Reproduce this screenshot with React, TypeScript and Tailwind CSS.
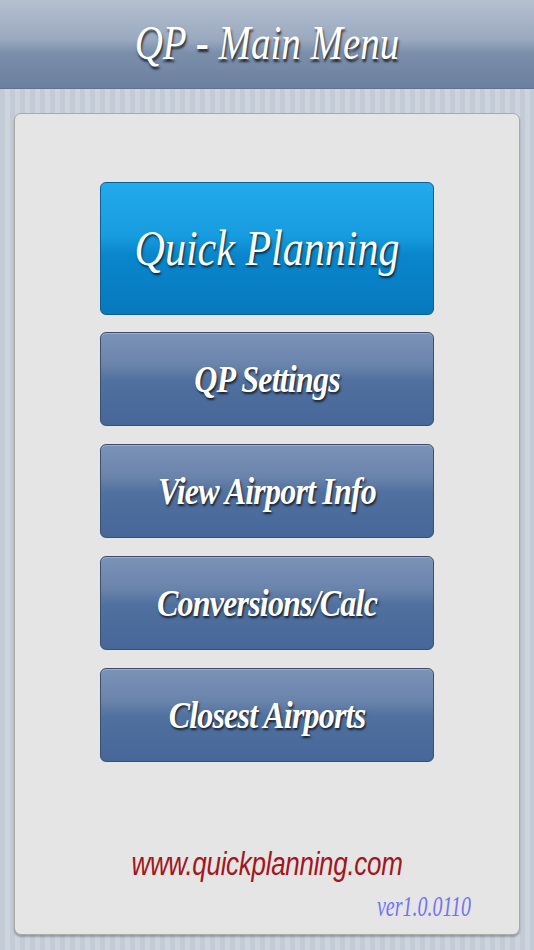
import React from "react";

const serif = "font-['Liberation_Serif',_'Times_New_Roman',_serif]";

function MenuButton({ label }: { label: string }) {
  return (
    <button className="h-[94px] w-full rounded-[6px] border border-[#3b4f70] bg-[linear-gradient(180deg,#7c93b7_0%,#6a83ab_35%,#50709f_52%,#466798_100%)] shadow-[inset_0_1px_0_rgba(255,255,255,0.25)] flex items-center justify-center">
      <span
        className={`${serif} inline-block scale-y-[1.18] text-[32px] font-bold italic tracking-[-0.8px] text-white [text-shadow:1px_2px_2px_rgba(0,0,0,0.75)]`}
      >
        {label}
      </span>
    </button>
  );
}

export default function App() {
  return (
    <div className="flex h-[950px] w-[534px] flex-col bg-[repeating-linear-gradient(90deg,#c3cbd6_0px,#c3cbd6_5px,#cdd4de_5px,#cdd4de_10px)]">
      <header className="flex h-[89px] shrink-0 items-center justify-center bg-[linear-gradient(180deg,#b5c0d0_0%,#9aa9bf_45%,#7b8fab_60%,#6b809f_100%)] border-b border-[#5e7394]">
        <h1
          className={`${serif} inline-block scale-y-[1.24] text-[39px] italic text-white [text-shadow:1px_2px_2px_rgba(0,0,0,0.7)] -mt-[2px]`}
        >
          QP - Main Menu
        </h1>
      </header>
      <div className="px-[14px] pt-[24px]">
        <main className="flex h-[822px] flex-col rounded-[7px] border border-[#a9a9a9] bg-[#e5e5e5] shadow-[0_2px_2px_rgba(0,0,0,0.25)] px-[85px] pt-[68px]">
          <button className="flex h-[133px] w-full items-center justify-center rounded-[6px] border border-[#0b5f96] bg-[linear-gradient(180deg,#22aaec_0%,#179ddf_40%,#0a86cc_55%,#0779bd_100%)]">
            <span
              className={`${serif} inline-block scale-y-[1.2] text-[42px] italic text-white [text-shadow:1px_2px_2px_rgba(0,0,0,0.7)]`}
            >
              Quick Planning
            </span>
          </button>
          <div className="mt-[17px] flex flex-col gap-[18px]">
            <MenuButton label="QP Settings" />
            <MenuButton label="View Airport Info" />
            <MenuButton label="Conversions/Calc" />
            <MenuButton label="Closest Airports" />
          </div>
          <div className="mt-[82px] flex flex-col items-center">
            <span className="inline-block scale-y-[1.3] font-['Liberation_Sans',_Arial,_sans-serif] text-[26px] italic tracking-[-0.3px] text-[#a3161b]">
              www.quickplanning.com
            </span>
          </div>
          <div className="mt-[8px] -mr-[37px] flex justify-end">
            <span className={`${serif} inline-block scale-y-[1.45] text-[20px] italic text-[#7474f2]`}>
              ver1.0.0110
            </span>
          </div>
        </main>
      </div>
    </div>
  );
}
